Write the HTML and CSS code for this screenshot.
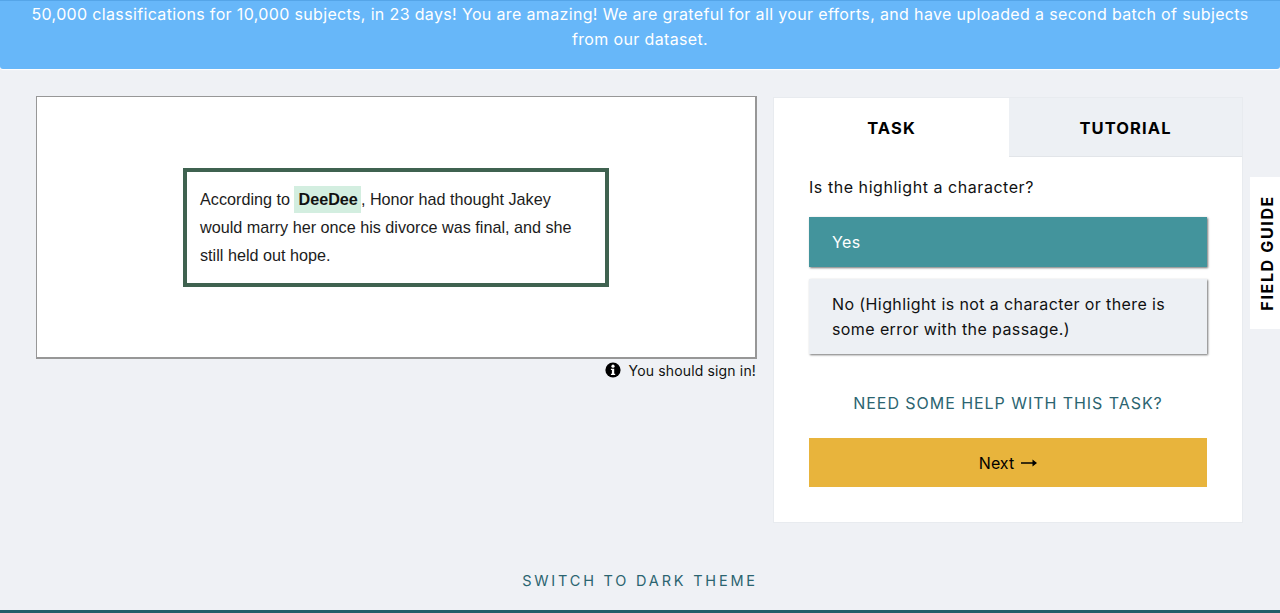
FILE: index.html
```html
<!DOCTYPE html>
<html lang="en">
<head>
    <meta charset="UTF-8">
    <meta name="viewport" content="width=device-width, initial-scale=1.0">
    <title>Classify</title>
    <link rel="stylesheet" href="styles.css">
</head>
<body>
    <div class="banner">50,000 classifications for 10,000 subjects, in 23 days! You are amazing! We are grateful for all your efforts, and have uploaded a second batch of subjects from our dataset.</div>

    <div class="classifier">
        <div class="subject-column">
            <div class="subject">
                <div class="passage">
                    According to <mark class="highlight">DeeDee</mark>, Honor had thought Jakey would marry her once his divorce was final, and she still held out hope.
                </div>
            </div>
            <div class="sign-in">
                <svg class="info-icon" viewBox="0 0 16 16" aria-hidden="true">
                    <circle cx="8" cy="8" r="7.6" fill="#000"/>
                    <circle cx="8" cy="4.2" r="1.6" fill="#fff"/>
                    <path d="M5.9 6.8h3.3v4.9h1v1.3H5.9v-1.3h1v-3.6h-1z" fill="#fff"/>
                </svg>
                <span>You should sign in!</span>
            </div>
        </div>

        <div class="task-panel">
            <div class="tabs">
                <div class="tab active">TASK</div>
                <div class="tab">TUTORIAL</div>
            </div>
            <div class="task-body">
                <p class="question">Is the highlight a character?</p>
                <button class="answer selected">Yes</button>
                <button class="answer">No (Highlight is not a character or there is some error with the passage.)</button>
                <p class="help">NEED SOME HELP WITH THIS TASK?</p>
                <button class="next">
                    Next
                    <svg class="arrow" viewBox="0 0 16 8" aria-hidden="true">
                        <path d="M0 3.2h11.5V.6L16 4l-4.5 3.4V4.8H0z" fill="#000"/>
                    </svg>
                </button>
            </div>
        </div>
    </div>

    <div class="field-guide"><span>FIELD GUIDE</span></div>

    <div class="theme-switch">SWITCH TO DARK THEME</div>
    <div class="footer-bar"></div>
</body>
</html>
```

FILE: styles.css
```css
html, body {
    height: 100%;
}

body {
    font-family: 'Inter', 'Noto Sans', sans-serif;
    background-color: #eff1f5;
    color: #000;
    margin: 0;
    position: relative;
    overflow: hidden;
    display: flex;
    flex-direction: column;
}

.banner {
    height: 69px;
    box-sizing: border-box;
    padding: 1px 24px 0;
    background-color: #67b7f9;
    border-top: 1px solid #55a5e8;
    border-radius: 0 0 3px 3px;
    box-shadow: 0 1px 1px #fff;
    color: #fff;
    font-size: 16px;
    line-height: 25px;
    letter-spacing: 0.35px;
    text-align: center;
}

.classifier {
    display: flex;
    align-items: flex-start;
    gap: 17px;
    padding: 27px 38px 0 36px;
}

.subject-column {
    width: 721px;
}

.subject {
    height: 263px;
    box-sizing: border-box;
    background-color: #fff;
    border: 1px solid #979797;
    border-bottom-width: 2px;
    border-right-width: 2px;
    display: flex;
    align-items: center;
    justify-content: center;
}

.passage {
    width: 426px;
    height: 119px;
    box-sizing: border-box;
    padding: 13px 13px 0;
    border: 4px solid #3f6250;
    font-family: 'Liberation Sans', sans-serif;
    font-size: 16.2px;
    line-height: 28px;
    color: #1c1c1c;
}

.highlight {
    background-color: #d3eee0;
    color: #111;
    font-weight: bold;
    padding: 4px 3px 5px 4px;
}

.sign-in {
    display: flex;
    justify-content: flex-end;
    align-items: center;
    gap: 8px;
    margin-top: 2px;
    padding-right: 1px;
    font-size: 14px;
    line-height: 20px;
    letter-spacing: 0.15px;
    color: #111;
}

.info-icon {
    width: 16px;
    height: 16px;
    margin-top: -3px;
}

.task-panel {
    width: 468px;
    height: 424px;
    margin-top: 2px;
    background-color: #fff;
    outline: 1px solid #e8ebef;
}

.tabs {
    display: flex;
    height: 59px;
}

.tab {
    width: 233px;
    box-sizing: border-box;
    background-color: #edf0f4;
    border-bottom: 1px solid #e2e5e9;
    font-size: 16.5px;
    font-weight: 700;
    letter-spacing: 1.1px;
    line-height: 61px;
    text-align: center;
}

.tab.active {
    width: 235px;
    background-color: #fff;
    border-bottom: none;
}

.task-body {
    padding: 18px 35px 0;
}

.question {
    margin: 0 0 17px;
    font-size: 16px;
    line-height: 25px;
    letter-spacing: 0.55px;
    color: #111;
}

.answer {
    display: block;
    width: 100%;
    margin-bottom: 12px;
    padding: 13px 23px 12px;
    border: none;
    background-color: #edf0f4;
    box-shadow: 1px 1px 2px rgba(0, 0, 0, 0.55);
    color: #111;
    font-family: inherit;
    font-size: 16px;
    line-height: 25px;
    letter-spacing: 0.4px;
    text-align: left;
}

.answer.selected {
    background-color: #43949c;
    color: #fff;
}

.help {
    margin: 37px 0 22px;
    color: #2b6470;
    font-size: 16px;
    line-height: 25px;
    letter-spacing: 0.95px;
    text-align: center;
}

.next {
    display: flex;
    align-items: center;
    justify-content: center;
    gap: 7px;
    width: 100%;
    height: 49px;
    border: none;
    background-color: #e8b43c;
    color: #000;
    font-family: inherit;
    font-size: 16px;
}

.arrow {
    width: 16px;
    height: 8px;
}

.field-guide {
    position: absolute;
    top: 177px;
    right: 0;
    width: 30px;
    height: 152px;
    padding-left: 4px;
    box-sizing: border-box;
    background-color: #fff;
    display: flex;
    align-items: center;
    justify-content: center;
}

.field-guide span {
    writing-mode: vertical-rl;
    transform: rotate(180deg);
    font-size: 16px;
    font-weight: 700;
    letter-spacing: 1.65px;
    white-space: nowrap;
}

.theme-switch {
    margin-top: auto;
    padding-bottom: 19px;
    color: #2b6470;
    font-size: 14.5px;
    line-height: 20px;
    letter-spacing: 2.8px;
    text-align: center;
}

.footer-bar {
    height: 3px;
    background-color: #235e69;
}
```
